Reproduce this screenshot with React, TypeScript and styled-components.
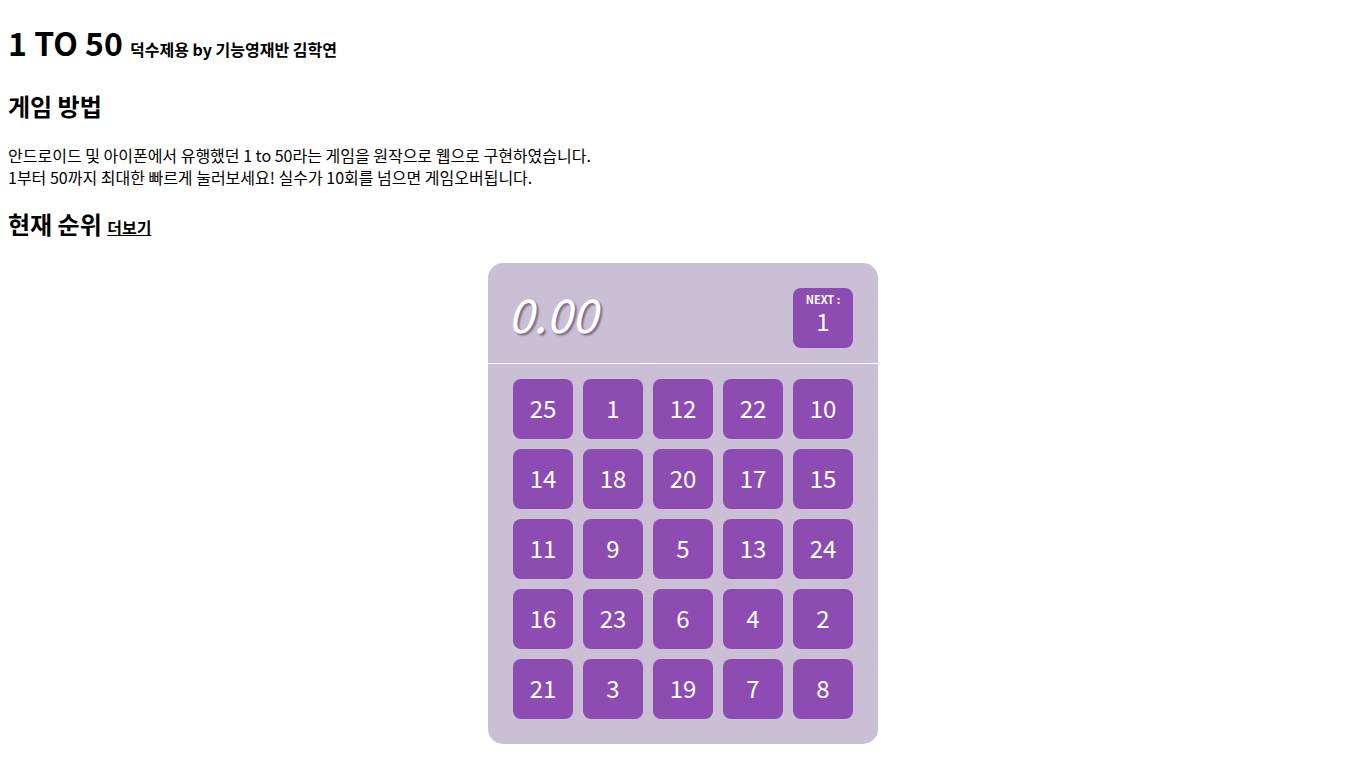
import React from "react";
import styled, { createGlobalStyle } from "styled-components";

const Global = createGlobalStyle`
  body {
    margin: 8px;
    font-family: "Noto Sans CJK KR", "Noto Sans", sans-serif;
    color: #000;
    background: #fff;
  }
`;

const Title = styled.h1`
  font-size: 32px;
  font-weight: 700;
  margin: 11px 0 23px;
`;

const Byline = styled.small`
  font-size: 16px;
  font-weight: 700;
`;

const Heading = styled.h2`
  font-size: 24px;
  font-weight: 700;
  margin: 0 0 21px;
`;

const SubHeading = styled.h2`
  font-size: 24px;
  font-weight: 700;
  margin: 18px 0 22px;
`;

const MoreLink = styled.a`
  font-size: 16px;
  color: #000;
  text-decoration: underline;
`;

const Desc = styled.p`
  font-size: 16px;
  margin: 0;
  line-height: 22px;
`;

const Board = styled.div`
  width: 390px;
  margin: 0 auto;
  background: #cbbfd6;
  border-radius: 15px;
  overflow: hidden;
`;

const BoardHeader = styled.div`
  display: flex;
  align-items: center;
  justify-content: space-between;
  padding: 25px 25px 15px 20px;
  border-bottom: 1px solid #fff;
`;

const Timer = styled.div`
  font-size: 46px;
  font-style: italic;
  color: #fff;
  text-shadow: 2px 2px 2px #7a6a86;
  line-height: 1;
  margin-bottom: 10px;
`;

const NextBox = styled.div`
  width: 60px;
  height: 60px;
  box-sizing: border-box;
  padding-top: 4px;
  border-radius: 8px;
  background: #8c4cb1;
  color: #fff;
  display: flex;
  flex-direction: column;
  align-items: center;
`;

const NextLabel = styled.span`
  font-size: 11px;
  font-weight: 700;
  line-height: 14px;
`;

const NextValue = styled.span`
  font-size: 24px;
  line-height: 28px;
  margin-top: 1px;
`;

const Grid = styled.div`
  display: grid;
  grid-template-columns: repeat(5, 60px);
  gap: 10px;
  padding: 15px 25px 25px;
`;

const Tile = styled.button`
  width: 60px;
  height: 60px;
  border: none;
  border-radius: 8px;
  background: #8c4cb1;
  color: #fff;
  font-family: "Noto Sans CJK KR", "Noto Sans", sans-serif;
  font-size: 24px;
  padding: 0 0 4px;
  cursor: pointer;
`;

const numbers = [
  25, 1, 12, 22, 10, 14, 18, 20, 17, 15, 11, 9, 5, 13, 24, 16, 23, 6, 4, 2, 21,
  3, 19, 7, 8,
];

export default function App() {
  return (
    <>
      <Global />
      <Title>
        1 TO 50 <Byline>덕수제용 by 기능영재반 김학연</Byline>
      </Title>
      <Heading>게임 방법</Heading>
      <Desc>
        안드로이드 및 아이폰에서 유행했던 1 to 50라는 게임을 원작으로 웹으로
        구현하였습니다.
        <br />
        1부터 50까지 최대한 빠르게 눌러보세요! 실수가 10회를 넘으면
        게임오버됩니다.
      </Desc>
      <SubHeading>
        현재 순위 <MoreLink href="#">더보기</MoreLink>
      </SubHeading>
      <Board>
        <BoardHeader>
          <Timer>0.00</Timer>
          <NextBox>
            <NextLabel>NEXT :</NextLabel>
            <NextValue>1</NextValue>
          </NextBox>
        </BoardHeader>
        <Grid>
          {numbers.map((n) => (
            <Tile key={n}>{n}</Tile>
          ))}
        </Grid>
      </Board>
    </>
  );
}
